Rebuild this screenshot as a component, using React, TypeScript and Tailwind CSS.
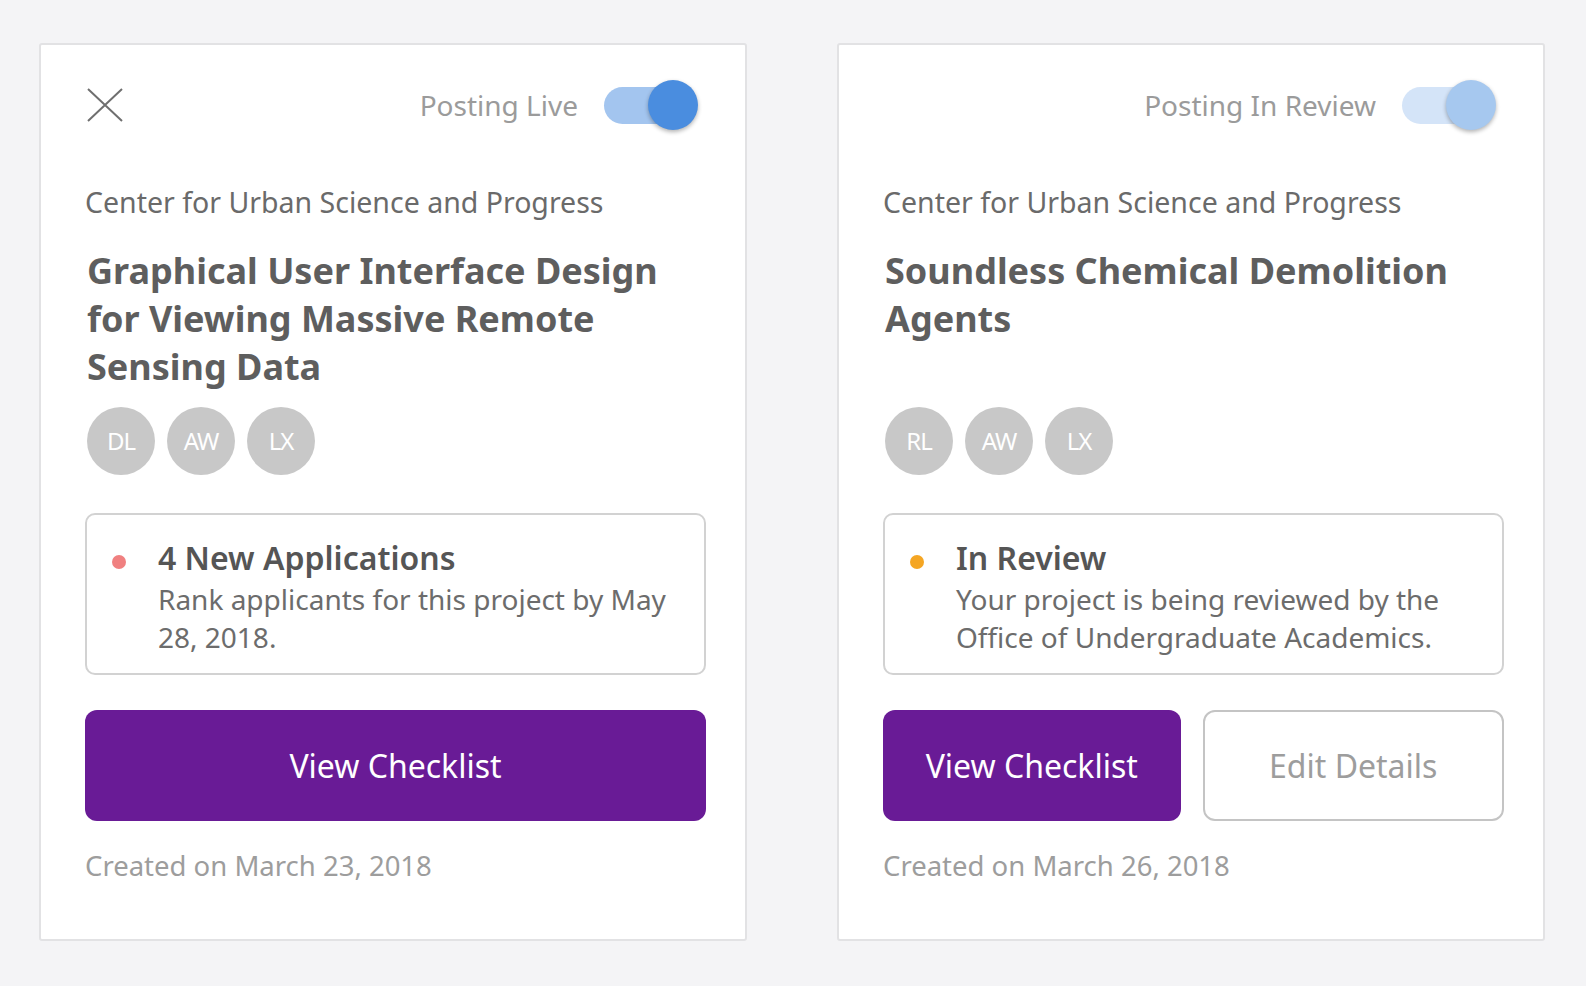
import React from "react";

type CardProps = {
  live: boolean;
  showClose: boolean;
  statusLabel: string;
  title: string;
  avatars: string[];
  dot: string;
  statusTitle: string;
  statusBody: string;
  created: string;
  edit: boolean;
};

function Toggle({ live }: { live: boolean }) {
  return (
    <div className="relative mr-[8px] h-[50px] w-[94px] flex items-center">
      <div
        className={
          "h-[37px] w-[92px] rounded-full " +
          (live ? "bg-[#a3c5ef]" : "bg-[#d4e4f8]")
        }
      />
      <div
        className={
          "absolute right-0 top-0 h-[50px] w-[50px] rounded-full shadow-[0_2px_4px_rgba(0,0,0,0.3)] " +
          (live ? "bg-[#4a8ddf]" : "bg-[#a6c8ef]")
        }
      />
    </div>
  );
}

function Card(p: CardProps) {
  return (
    <div className="flex h-[898px] w-[708px] flex-col rounded-[3px] border-2 border-[#e2e2e4] bg-white pl-[44px] pr-[39px] pt-[35px]">
      <div className="flex h-[50px] items-center">
        {p.showClose ? (
          <svg width="36" height="34" viewBox="0 0 36 34" className="ml-[2px]">
            <path d="M1 1 L35 33 M35 1 L1 33" stroke="#6f6f6f" strokeWidth="2" fill="none" />
          </svg>
        ) : null}
        <div className="flex-1" />
        <span className="mr-[26px] text-[28px] leading-[36px] text-[#9b9b9b]">{p.statusLabel}</span>
        <Toggle live={p.live} />
      </div>
      <div className="mt-[52px] text-[28.5px] leading-[40px] text-[#6a6a6a]">
        Center for Urban Science and Progress
      </div>
      <div className="ml-[2px] mt-[25px] min-h-[144px] text-[36px] font-bold leading-[48px] text-[#5e5e5e]">
        {p.title}
      </div>
      <div className="ml-[2px] mt-[16px] flex gap-[12px]">
        {p.avatars.map((a) => (
          <div
            key={a}
            className="flex h-[68px] w-[68px] items-center justify-center rounded-full bg-[#c8c8c8] text-[24px] tracking-[-1px] text-white"
          >
            {a}
          </div>
        ))}
      </div>
      <div className="mt-[38px] flex h-[162px] rounded-[10px] border-2 border-[#d2d2d2] pl-[25px] pt-[23px]">
        <div className={"mt-[17px] h-[14px] w-[14px] shrink-0 rounded-full " + p.dot} />
        <div className="ml-[32px] pr-[20px]">
          <div className="text-[32px] font-semibold leading-[40px] text-[#555555]">{p.statusTitle}</div>
          <div className="mt-[2px] text-[28px] leading-[38px] text-[#6c6c6c]">{p.statusBody}</div>
        </div>
      </div>
      <div className="mt-[35px] flex gap-[22px]">
        <button className="flex h-[111px] flex-1 items-center justify-center rounded-[12px] bg-[#691b96] text-[32px] text-white">
          View Checklist
        </button>
        {p.edit ? (
          <button className="flex h-[111px] flex-1 items-center justify-center rounded-[12px] border-2 border-[#c4c4c4] bg-white text-[32px] text-[#9d9d9d]">
            Edit Details
          </button>
        ) : null}
      </div>
      <div className="mt-[27px] text-[27.5px] leading-[36px] text-[#9d9d9d]">{p.created}</div>
    </div>
  );
}

export default function App() {
  return (
    <div
      className="flex min-h-[986px] w-full items-start gap-[90px] bg-[#f4f4f6] pl-[39px] pt-[43px]"
      style={{ fontFamily: '"Noto Sans", "Open Sans", sans-serif' }}
    >
      <Card
        live
        showClose
        statusLabel="Posting Live"
        title="Graphical User Interface Design for Viewing Massive Remote Sensing Data"
        avatars={["DL", "AW", "LX"]}
        dot="bg-[#f08080]"
        statusTitle="4 New Applications"
        statusBody="Rank applicants for this project by May 28, 2018."
        created="Created on March 23, 2018"
        edit={false}
      />
      <Card
        live={false}
        showClose={false}
        statusLabel="Posting In Review"
        title="Soundless Chemical Demolition Agents"
        avatars={["RL", "AW", "LX"]}
        dot="bg-[#f5a623]"
        statusTitle="In Review"
        statusBody="Your project is being reviewed by the Office of Undergraduate Academics."
        created="Created on March 26, 2018"
        edit
      />
    </div>
  );
}
